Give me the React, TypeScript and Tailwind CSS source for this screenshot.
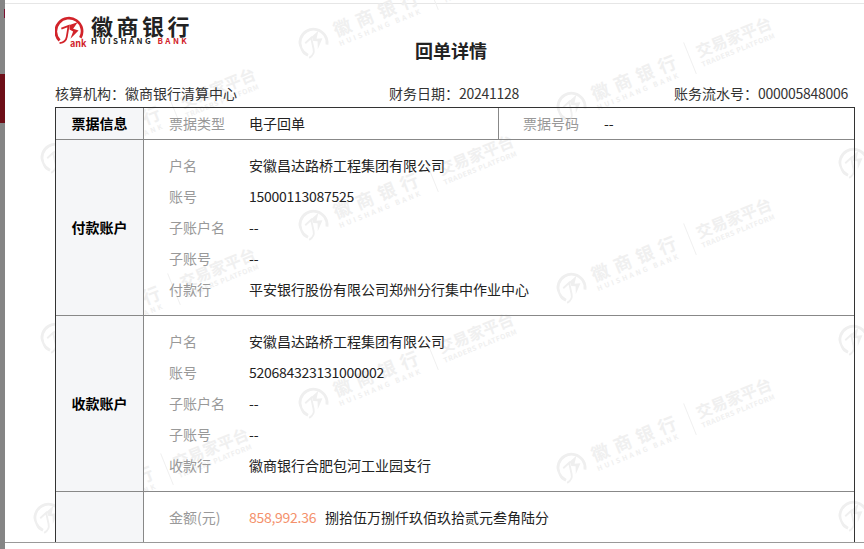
const font = { fontFamily: '"Noto Sans CJK SC", "Liberation Sans", sans-serif' };

const marks = [
    "left-[298px] top-[25px]",
    "left-[556px] top-[89px]",
    "left-[838px] top-[145px]",
    "left-[40px] top-[140px]",
    "left-[298px] top-[207px]",
    "left-[556px] top-[270px]",
    "left-[838px] top-[322px]",
    "left-[40px] top-[320px]",
    "left-[298px] top-[385px]",
    "left-[556px] top-[450px]",
    "left-[838px] top-[498px]",
    "left-[33px] top-[500px]",
];

const payer = [
    { label: "户名", value: "安徽昌达路桥工程集团有限公司" },
    { label: "账号", value: "15000113087525", num: true },
    { label: "子账户名", value: "--" },
    { label: "子账号", value: "--" },
    { label: "付款行", value: "平安银行股份有限公司郑州分行集中作业中心" },
];

const payee = [
    { label: "户名", value: "安徽昌达路桥工程集团有限公司" },
    { label: "账号", value: "520684323131000002", num: true },
    { label: "子账户名", value: "--" },
    { label: "子账号", value: "--" },
    { label: "收款行", value: "徽商银行合肥包河工业园支行" },
];

function BankLogo({ className, color }: { className: string; color: string }) {
    return (
        <svg viewBox="0 0 32 32" className={className} fill="none">
            <path d="M5 27 A14.5 14.5 0 1 1 28 24" stroke={color} strokeWidth="3" />
            <path d="M7 14 L15 11 L13 23 Q12 29 5 30" stroke={color} strokeWidth="2" />
            <path d="M16 10 L25 7 L20 14 L26 16 L17 25 L20 17 L16 15 Z" fill={color} />
        </svg>
    );
}

function Watermark({ pos }: { pos: string }) {
    return (
        <div className={`absolute flex origin-[15px_15px] -rotate-[22deg] items-center gap-[8px] whitespace-nowrap text-[#f0f0f0] ${pos}`}>
            <BankLogo className="h-[30px] w-[30px] shrink-0" color="#efefef" />
            <div className="flex flex-col">
                <span className="text-[18px] leading-[22px] font-bold tracking-[6px]">徽商银行</span>
                <span className="text-[7px] leading-[9px] font-bold tracking-[2.4px]">HUISHANG BANK</span>
            </div>
            <div className="h-[34px] w-px bg-[#f0f0f0]" />
            <div className="flex flex-col">
                <span className="text-[16px] leading-[20px] font-bold">交易家平台</span>
                <span className="text-[7px] leading-[9px] font-bold tracking-[0.5px]">TRADERS PLATFORM</span>
            </div>
        </div>
    );
}

function Field({ label, value, num }: { label: string; value: string; num?: boolean }) {
    return (
        <div className="flex h-[31px] items-center">
            <span className="w-[80px] text-[#999]">{label}</span>
            <span className={num ? "tracking-[-0.27px] text-[#222]" : "text-[#222]"}>{value}</span>
        </div>
    );
}

function Section({ title, rows }: { title: string; rows: typeof payer }) {
    return (
        <div className="flex h-[176px] shrink-0 border-b border-[#888]">
            <div className="flex w-[88px] items-center justify-center border-r border-[#888] bg-[#f5f6f8] font-bold text-black">
                {title}
            </div>
            <div className="flex-1 pt-[10px] pl-[25px]">
                {rows.map((r) => (
                    <Field key={r.label} {...r} />
                ))}
            </div>
        </div>
    );
}

export default function App() {
    return (
        <div style={font} className="flex h-[549px] w-[864px] overflow-hidden bg-white text-[14px]">
            <aside className="flex w-[5px] shrink-0 flex-col bg-[#858585] pt-[9px]">
                <div className="ml-auto h-[9px] w-px bg-[#7a1030]" />
                <div className="mt-[56px] h-[49px] bg-[#6e0f18]" />
            </aside>

            <main className="relative flex min-w-0 flex-1 flex-col pt-[3px]">
                <div className="h-px bg-[#e6e6e6]" />

                <div className="pointer-events-none absolute top-0 -left-[5px] h-[549px] w-[864px] overflow-hidden">
                    {marks.map((m) => (
                        <Watermark key={m} pos={m} />
                    ))}
                </div>

                <div className="relative flex h-[539px] flex-col border-b border-[#999] pt-[9px] pl-[50px]">
                    <div className="flex h-[32px] items-start gap-[4px]">
                        <div className="relative h-[32px] w-[32px]">
                            <BankLogo className="mt-[3px] h-[29px] w-[29px]" color="#d2232a" />
                            <span className="absolute top-[26px] left-[15px] text-[9px] leading-[9px] font-bold text-[#d2232a]">ank</span>
                        </div>
                        <div className="flex flex-col">
                            <span className="text-[22px] leading-[24px] font-bold tracking-[3.5px] text-[#222]">徽商银行</span>
                            <span className="text-[8px] leading-[8px] font-bold tracking-[2.45px] text-[#222]">
                                HUISHANG <span className="text-[#d2232a]">BANK</span>
                            </span>
                        </div>
                    </div>

                    <div className="-mt-[7px] pr-[17px] text-center text-[18px] leading-[24px] font-bold text-[#222]">回单详情</div>

                    <div className="mt-[19px] flex h-[24px] w-[793px] items-center justify-between text-[#333]">
                        <span>核算机构：徽商银行清算中心</span>
                        <span className="pr-[3px]">
                            财务日期：<span className="tracking-[-0.27px]">20241128</span>
                        </span>
                        <span>
                            账务流水号：<span className="tracking-[-0.27px]">000005848006</span>
                        </span>
                    </div>

                    <div className="mt-[2px] flex min-h-0 w-[800px] flex-1 flex-col border-x border-t border-[#333]">
                        <div className="flex h-[32px] shrink-0 border-b border-[#888]">
                            <div className="flex w-[88px] items-center justify-center border-r border-[#888] bg-[#f5f6f8] font-bold text-black">
                                票据信息
                            </div>
                            <div className="flex w-[355px] items-center border-r border-[#888] pl-[25px]">
                                <span className="w-[80px] text-[#999]">票据类型</span>
                                <span className="text-[#222]">电子回单</span>
                            </div>
                            <div className="flex flex-1 items-center pl-[24px]">
                                <span className="w-[81px] text-[#999]">票据号码</span>
                                <span className="text-[#222]">--</span>
                            </div>
                        </div>
                        <Section title="付款账户" rows={payer} />
                        <Section title="收款账户" rows={payee} />
                        <div className="flex min-h-0 flex-1">
                            <div className="w-[88px] border-r border-[#888] bg-[#f5f6f8]" />
                            <div className="flex flex-1 items-center pl-[25px]">
                                <span className="w-[80px] text-[#999]">金额(元)</span>
                                <span className="w-[76px] tracking-[-0.27px] text-[#f4916c]">858,992.36</span>
                                <span className="text-[#222]">捌拾伍万捌仟玖佰玖拾贰元叁角陆分</span>
                            </div>
                        </div>
                    </div>
                </div>
            </main>
        </div>
    );
}
